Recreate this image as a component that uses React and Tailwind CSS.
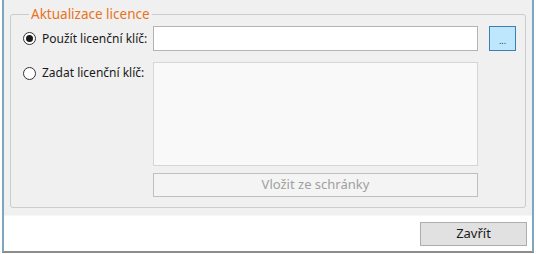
import React from "react";

const FONT = { fontFamily: '"Noto Sans", "Open Sans", sans-serif' };

const Radio = ({ checked }) => (
    <span className="flex items-center justify-center w-[13px] h-[13px] rounded-full border border-[#333] bg-white shrink-0">
        {checked && <span className="w-[7px] h-[7px] rounded-full bg-[#1a1a1a]" />}
    </span>
);

export default function App() {
    return (
        <div className="w-[536px] h-[254px] bg-white text-[12px] text-[#1a1a1a]" style={FONT}>
            <div className="ml-[2px] w-[532px] h-[253px] border-l-2 border-r-2 border-b-2 border-l-[#7fa4bd] border-r-[#7fa4bd] border-b-[#8c8c8c] flex flex-col">
                {/* Top gray area */}
                <div className="bg-[#f0f0f0] h-[215px] px-[6px] pt-[6px]">
                    <fieldset className="border border-[#cccccc] rounded-[3px] pl-[12px] pr-[9px] pt-[4px] pb-[10px] m-0">
                        <legend className="ml-[6px] px-[2px] text-[#e8731c] text-[13.5px] leading-[16px]">
                            Aktualizace licence
                        </legend>

                        {/* Row 1 */}
                        <div className="flex items-center">
                            <label className="flex items-center gap-[6px] w-[130px] shrink-0">
                                <Radio checked />
                                <span>Použít licenční klíč:</span>
                            </label>
                            <div className="w-[325px] h-[25px] bg-white border border-[#b4b4b4]" />
                            <button className="ml-[11px] w-[27px] h-[25px] bg-[#bee6fd] border border-[#3c7fb1] text-[9px] leading-none text-[#333] pt-[3px]">
                                ...
                            </button>
                        </div>

                        {/* Row 2 */}
                        <div className="flex mt-[11px]">
                            <label className="flex items-center gap-[6px] w-[130px] shrink-0 h-[22px]">
                                <Radio />
                                <span>Zadat licenční klíč:</span>
                            </label>
                            <div className="flex flex-col">
                                <div className="w-[325px] h-[104px] bg-[#f9f9f9] border border-[#d6d6d6]" />
                                <button className="mt-[7px] w-[325px] h-[24px] bg-[#f4f4f4] border border-[#bfbfbf] text-[#a0a0a0] text-[13px]">
                                    Vložit ze schránky
                                </button>
                            </div>
                        </div>
                    </fieldset>
                </div>

                {/* Bottom white area */}
                <div className="flex-1 bg-white border-t border-[#f7f7f7] flex justify-end items-start pt-[6px] pr-[5px]">
                    <button className="w-[107px] h-[24px] bg-[#e1e1e1] border border-[#adadad] text-[#1a1a1a] text-[13px]">
                        Zavřít
                    </button>
                </div>
            </div>
        </div>
    );
}
